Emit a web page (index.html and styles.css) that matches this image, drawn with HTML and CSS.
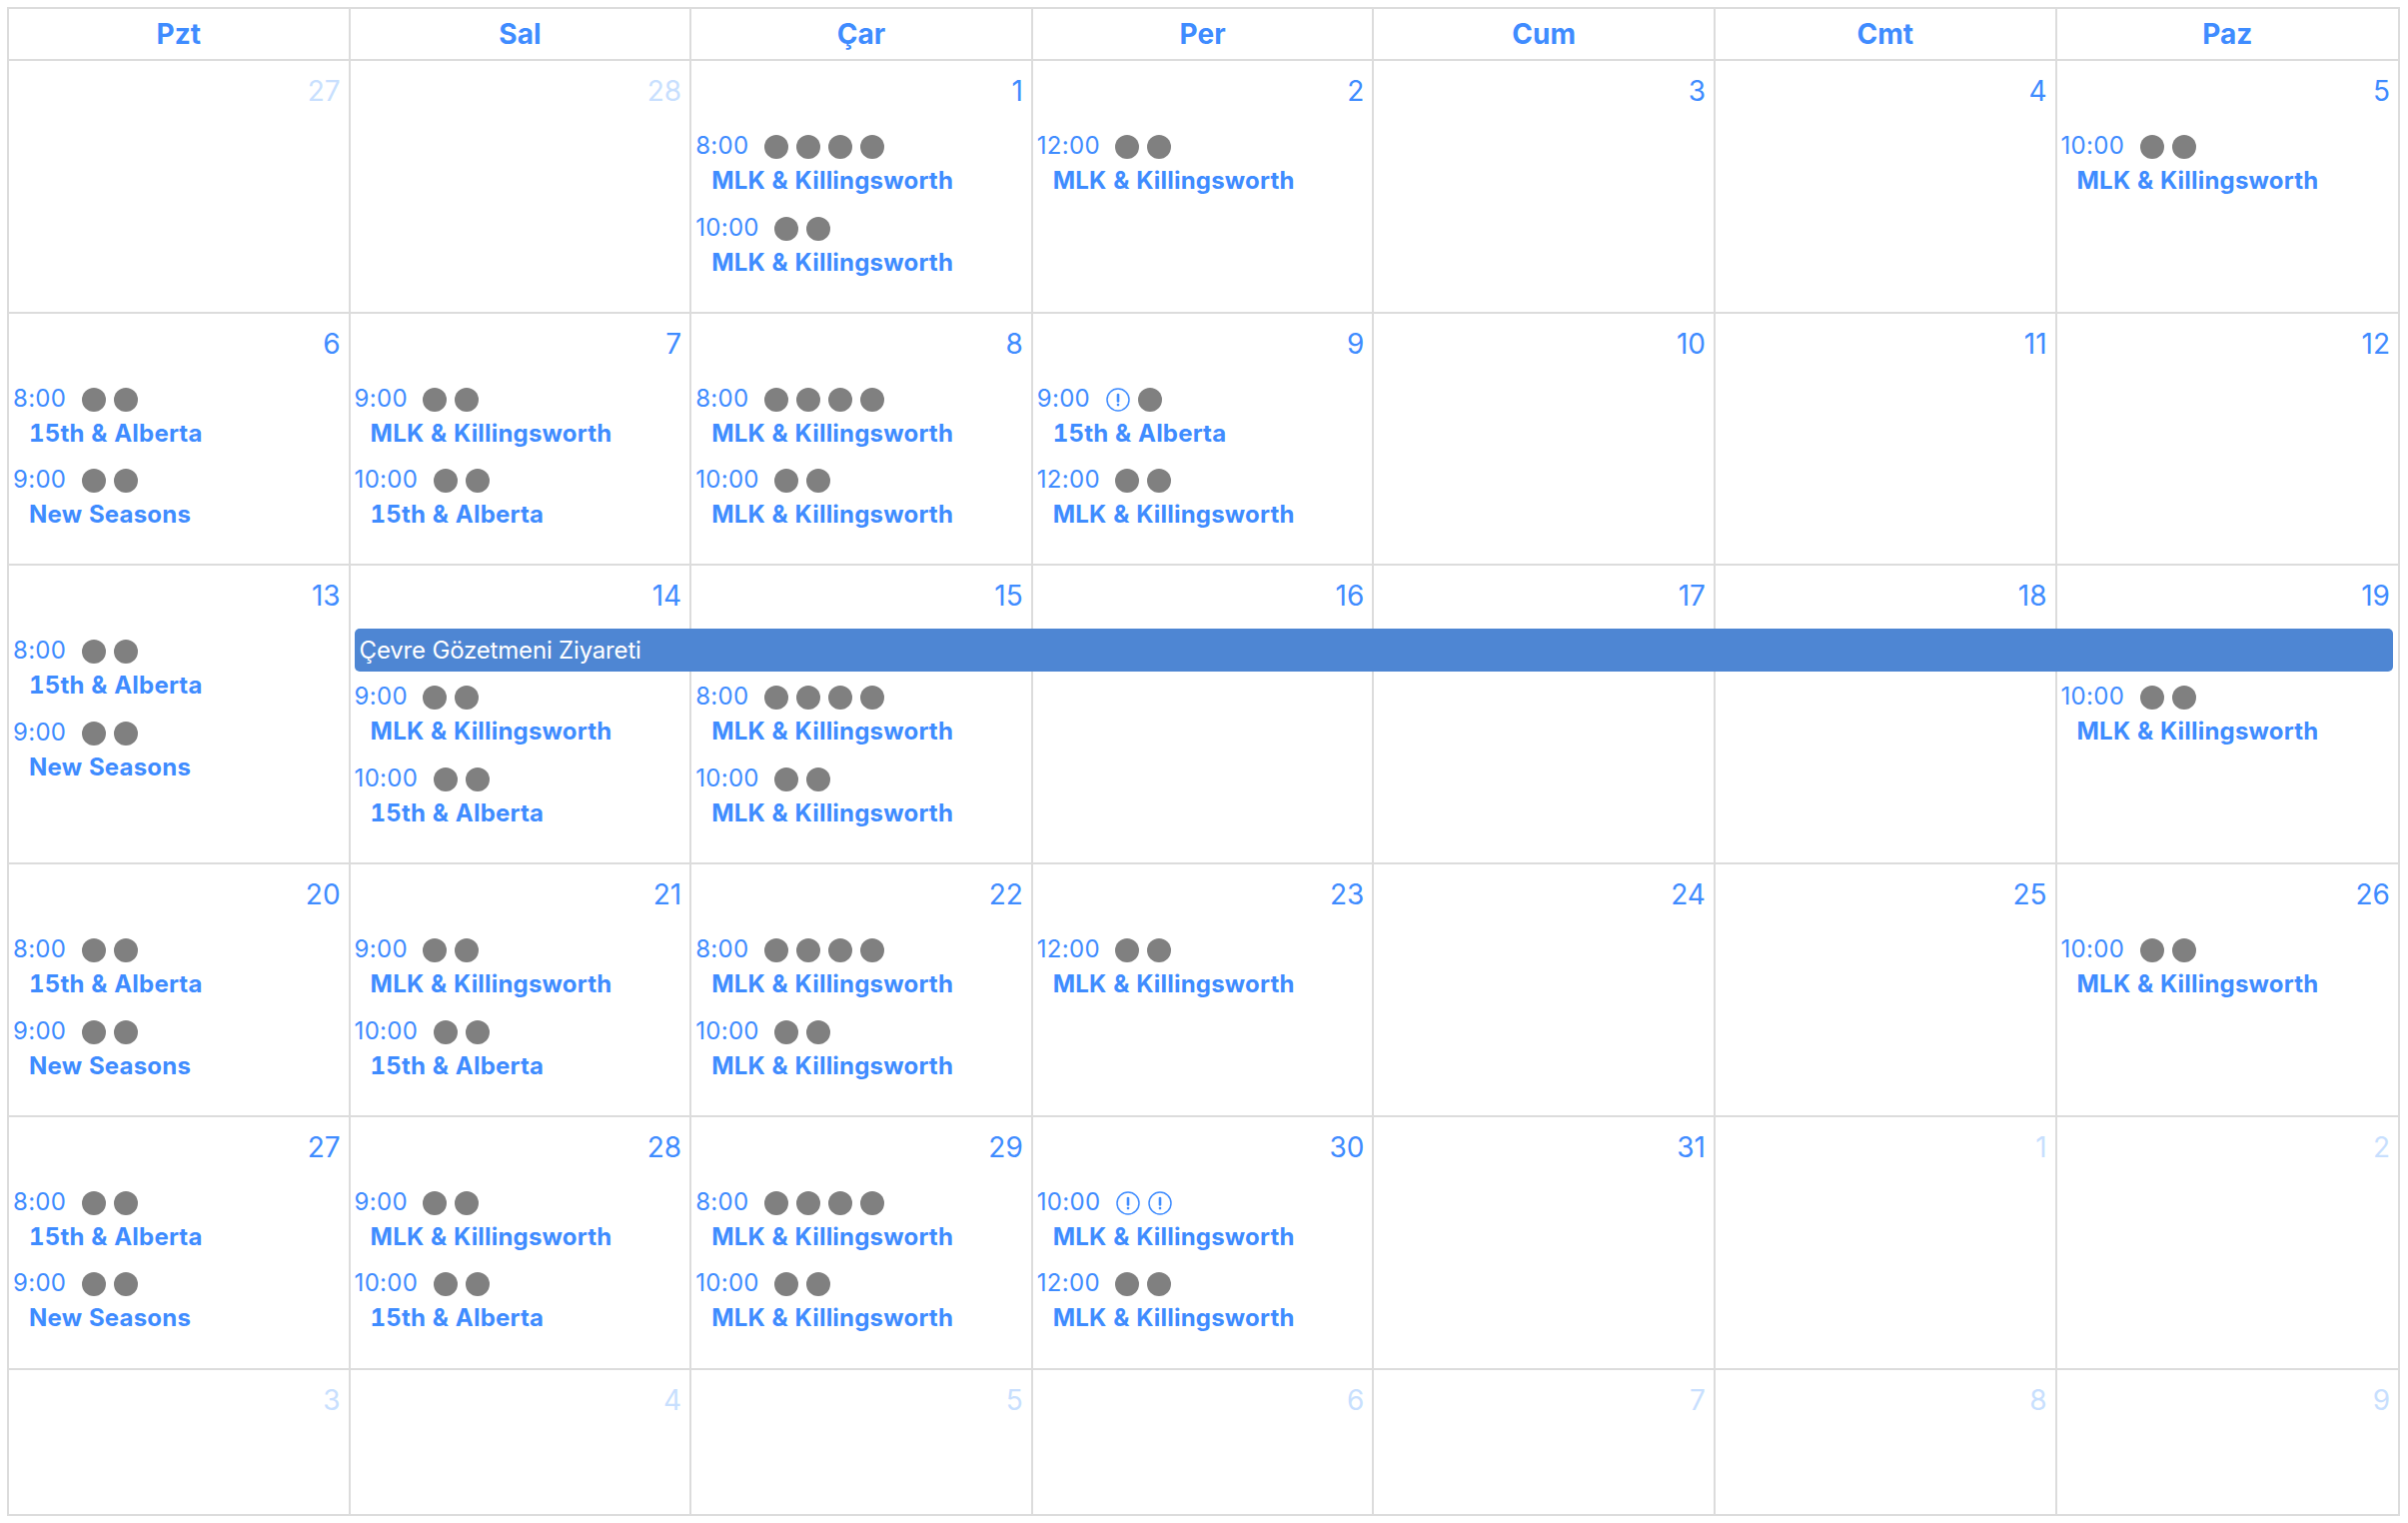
FILE: index.html
```html
<!DOCTYPE html>
<html lang="tr">
<head>
<meta charset="utf-8">
<title>Takvim</title>
<link rel="stylesheet" href="styles.css">
</head>
<body>
<div class="calendar">
  <div class="week head">
    <div class="dow">Pzt</div><div class="dow">Sal</div><div class="dow">Çar</div><div class="dow">Per</div><div class="dow">Cum</div><div class="dow">Cmt</div><div class="dow">Paz</div>
  </div>

  <div class="week">
    <div class="day other"><div class="num">27</div></div>
    <div class="day other"><div class="num">28</div></div>
    <div class="day"><div class="num">1</div>
      <div class="ev"><div class="ev-head"><span class="time">8:00</span><span class="marks"><i class="dot"></i><i class="dot"></i><i class="dot"></i><i class="dot"></i></span></div><div class="place">MLK &amp; Killingsworth</div></div>
      <div class="ev"><div class="ev-head"><span class="time">10:00</span><span class="marks"><i class="dot"></i><i class="dot"></i></span></div><div class="place">MLK &amp; Killingsworth</div></div>
    </div>
    <div class="day"><div class="num">2</div>
      <div class="ev"><div class="ev-head"><span class="time">12:00</span><span class="marks"><i class="dot"></i><i class="dot"></i></span></div><div class="place">MLK &amp; Killingsworth</div></div>
    </div>
    <div class="day"><div class="num">3</div></div>
    <div class="day"><div class="num">4</div></div>
    <div class="day"><div class="num">5</div>
      <div class="ev"><div class="ev-head"><span class="time">10:00</span><span class="marks"><i class="dot"></i><i class="dot"></i></span></div><div class="place">MLK &amp; Killingsworth</div></div>
    </div>
  </div>

  <div class="week">
    <div class="day"><div class="num">6</div>
      <div class="ev"><div class="ev-head"><span class="time">8:00</span><span class="marks"><i class="dot"></i><i class="dot"></i></span></div><div class="place">15th &amp; Alberta</div></div>
      <div class="ev"><div class="ev-head"><span class="time">9:00</span><span class="marks"><i class="dot"></i><i class="dot"></i></span></div><div class="place">New Seasons</div></div>
    </div>
    <div class="day"><div class="num">7</div>
      <div class="ev"><div class="ev-head"><span class="time">9:00</span><span class="marks"><i class="dot"></i><i class="dot"></i></span></div><div class="place">MLK &amp; Killingsworth</div></div>
      <div class="ev"><div class="ev-head"><span class="time">10:00</span><span class="marks"><i class="dot"></i><i class="dot"></i></span></div><div class="place">15th &amp; Alberta</div></div>
    </div>
    <div class="day"><div class="num">8</div>
      <div class="ev"><div class="ev-head"><span class="time">8:00</span><span class="marks"><i class="dot"></i><i class="dot"></i><i class="dot"></i><i class="dot"></i></span></div><div class="place">MLK &amp; Killingsworth</div></div>
      <div class="ev"><div class="ev-head"><span class="time">10:00</span><span class="marks"><i class="dot"></i><i class="dot"></i></span></div><div class="place">MLK &amp; Killingsworth</div></div>
    </div>
    <div class="day"><div class="num">9</div>
      <div class="ev"><div class="ev-head"><span class="time">9:00</span><span class="marks"><svg class="alert" viewBox="0 0 24 24"><circle cx="12" cy="12" r="11"/><path d="M12 7v6.5"/><path d="M12 17v.1"/></svg><i class="dot"></i></span></div><div class="place">15th &amp; Alberta</div></div>
      <div class="ev"><div class="ev-head"><span class="time">12:00</span><span class="marks"><i class="dot"></i><i class="dot"></i></span></div><div class="place">MLK &amp; Killingsworth</div></div>
    </div>
    <div class="day"><div class="num">10</div></div>
    <div class="day"><div class="num">11</div></div>
    <div class="day"><div class="num">12</div></div>
  </div>

  <div class="week">
    <div class="day"><div class="num">13</div>
      <div class="ev"><div class="ev-head"><span class="time">8:00</span><span class="marks"><i class="dot"></i><i class="dot"></i></span></div><div class="place">15th &amp; Alberta</div></div>
      <div class="ev"><div class="ev-head"><span class="time">9:00</span><span class="marks"><i class="dot"></i><i class="dot"></i></span></div><div class="place">New Seasons</div></div>
    </div>
    <div class="day under-bar"><div class="num">14</div>
      <div class="ev"><div class="ev-head"><span class="time">9:00</span><span class="marks"><i class="dot"></i><i class="dot"></i></span></div><div class="place">MLK &amp; Killingsworth</div></div>
      <div class="ev"><div class="ev-head"><span class="time">10:00</span><span class="marks"><i class="dot"></i><i class="dot"></i></span></div><div class="place">15th &amp; Alberta</div></div>
    </div>
    <div class="day under-bar"><div class="num">15</div>
      <div class="ev"><div class="ev-head"><span class="time">8:00</span><span class="marks"><i class="dot"></i><i class="dot"></i><i class="dot"></i><i class="dot"></i></span></div><div class="place">MLK &amp; Killingsworth</div></div>
      <div class="ev"><div class="ev-head"><span class="time">10:00</span><span class="marks"><i class="dot"></i><i class="dot"></i></span></div><div class="place">MLK &amp; Killingsworth</div></div>
    </div>
    <div class="day under-bar"><div class="num">16</div></div>
    <div class="day under-bar"><div class="num">17</div></div>
    <div class="day under-bar"><div class="num">18</div></div>
    <div class="day under-bar"><div class="num">19</div>
      <div class="ev"><div class="ev-head"><span class="time">10:00</span><span class="marks"><i class="dot"></i><i class="dot"></i></span></div><div class="place">MLK &amp; Killingsworth</div></div>
    </div>
    <div class="bar">Çevre Gözetmeni Ziyareti</div>
  </div>

  <div class="week">
    <div class="day"><div class="num">20</div>
      <div class="ev"><div class="ev-head"><span class="time">8:00</span><span class="marks"><i class="dot"></i><i class="dot"></i></span></div><div class="place">15th &amp; Alberta</div></div>
      <div class="ev"><div class="ev-head"><span class="time">9:00</span><span class="marks"><i class="dot"></i><i class="dot"></i></span></div><div class="place">New Seasons</div></div>
    </div>
    <div class="day"><div class="num">21</div>
      <div class="ev"><div class="ev-head"><span class="time">9:00</span><span class="marks"><i class="dot"></i><i class="dot"></i></span></div><div class="place">MLK &amp; Killingsworth</div></div>
      <div class="ev"><div class="ev-head"><span class="time">10:00</span><span class="marks"><i class="dot"></i><i class="dot"></i></span></div><div class="place">15th &amp; Alberta</div></div>
    </div>
    <div class="day"><div class="num">22</div>
      <div class="ev"><div class="ev-head"><span class="time">8:00</span><span class="marks"><i class="dot"></i><i class="dot"></i><i class="dot"></i><i class="dot"></i></span></div><div class="place">MLK &amp; Killingsworth</div></div>
      <div class="ev"><div class="ev-head"><span class="time">10:00</span><span class="marks"><i class="dot"></i><i class="dot"></i></span></div><div class="place">MLK &amp; Killingsworth</div></div>
    </div>
    <div class="day"><div class="num">23</div>
      <div class="ev"><div class="ev-head"><span class="time">12:00</span><span class="marks"><i class="dot"></i><i class="dot"></i></span></div><div class="place">MLK &amp; Killingsworth</div></div>
    </div>
    <div class="day"><div class="num">24</div></div>
    <div class="day"><div class="num">25</div></div>
    <div class="day"><div class="num">26</div>
      <div class="ev"><div class="ev-head"><span class="time">10:00</span><span class="marks"><i class="dot"></i><i class="dot"></i></span></div><div class="place">MLK &amp; Killingsworth</div></div>
    </div>
  </div>

  <div class="week">
    <div class="day"><div class="num">27</div>
      <div class="ev"><div class="ev-head"><span class="time">8:00</span><span class="marks"><i class="dot"></i><i class="dot"></i></span></div><div class="place">15th &amp; Alberta</div></div>
      <div class="ev"><div class="ev-head"><span class="time">9:00</span><span class="marks"><i class="dot"></i><i class="dot"></i></span></div><div class="place">New Seasons</div></div>
    </div>
    <div class="day"><div class="num">28</div>
      <div class="ev"><div class="ev-head"><span class="time">9:00</span><span class="marks"><i class="dot"></i><i class="dot"></i></span></div><div class="place">MLK &amp; Killingsworth</div></div>
      <div class="ev"><div class="ev-head"><span class="time">10:00</span><span class="marks"><i class="dot"></i><i class="dot"></i></span></div><div class="place">15th &amp; Alberta</div></div>
    </div>
    <div class="day"><div class="num">29</div>
      <div class="ev"><div class="ev-head"><span class="time">8:00</span><span class="marks"><i class="dot"></i><i class="dot"></i><i class="dot"></i><i class="dot"></i></span></div><div class="place">MLK &amp; Killingsworth</div></div>
      <div class="ev"><div class="ev-head"><span class="time">10:00</span><span class="marks"><i class="dot"></i><i class="dot"></i></span></div><div class="place">MLK &amp; Killingsworth</div></div>
    </div>
    <div class="day"><div class="num">30</div>
      <div class="ev"><div class="ev-head"><span class="time">10:00</span><span class="marks"><svg class="alert" viewBox="0 0 24 24"><circle cx="12" cy="12" r="11"/><path d="M12 7v6.5"/><path d="M12 17v.1"/></svg><svg class="alert" viewBox="0 0 24 24"><circle cx="12" cy="12" r="11"/><path d="M12 7v6.5"/><path d="M12 17v.1"/></svg></span></div><div class="place">MLK &amp; Killingsworth</div></div>
      <div class="ev"><div class="ev-head"><span class="time">12:00</span><span class="marks"><i class="dot"></i><i class="dot"></i></span></div><div class="place">MLK &amp; Killingsworth</div></div>
    </div>
    <div class="day"><div class="num">31</div></div>
    <div class="day other"><div class="num">1</div></div>
    <div class="day other"><div class="num">2</div></div>
  </div>

  <div class="week">
    <div class="day other"><div class="num">3</div></div>
    <div class="day other"><div class="num">4</div></div>
    <div class="day other"><div class="num">5</div></div>
    <div class="day other"><div class="num">6</div></div>
    <div class="day other"><div class="num">7</div></div>
    <div class="day other"><div class="num">8</div></div>
    <div class="day other"><div class="num">9</div></div>
  </div>
</div>
</body>
</html>
```

FILE: styles.css
```css
* { box-sizing: border-box; }

html, body {
  margin: 0;
  padding: 0;
  background: #fff;
}

body {
  padding: 7px 8px 7px 7px;
  font-family: Inter, "Liberation Sans", sans-serif;
  color: #3f8cff;
}

.calendar {
  display: grid;
  grid-template-rows: 52px 252.67px 252.67px 298.9px 252.67px 252.67px 146.3px;
  width: 2395px;
  border-top: 2px solid #dcdcdc;
  border-left: 2px solid #dcdcdc;
}

.week {
  display: grid;
  grid-template-columns: repeat(6, 341.6px) minmax(0, 1fr);
  grid-template-rows: 100%;
}

.dow,
.day {
  grid-row: 1;
  border-right: 2px solid #dcdcdc;
  border-bottom: 2px solid #dcdcdc;
  min-width: 0;
}

.day:nth-child(1) { grid-column: 1; }
.day:nth-child(2) { grid-column: 2; }
.day:nth-child(3) { grid-column: 3; }
.day:nth-child(4) { grid-column: 4; }
.day:nth-child(5) { grid-column: 5; }
.day:nth-child(6) { grid-column: 6; }
.day:nth-child(7) { grid-column: 7; }

.dow {
  font-size: 28px;
  font-weight: 700;
  line-height: 50px;
  text-align: center;
}

.day {
  padding: 13px 3px 0 4px;
}

.num {
  height: 34px;
  margin-bottom: 21px;
  padding-right: 5px;
  font-size: 28px;
  line-height: 34px;
  text-align: right;
}

.under-bar .num {
  margin-bottom: 67px;
}

.other .num {
  color: #c8dffe;
}

.ev {
  margin-bottom: 12.5px;
}

.ev-head {
  display: flex;
  align-items: flex-start;
  height: 34px;
}

.time {
  margin-right: 15.5px;
  font-size: 24px;
  letter-spacing: 0.3px;
  line-height: 34px;
}

.marks {
  display: flex;
  gap: 8px;
  margin-top: 6px;
}

.dot {
  display: block;
  flex: none;
  width: 24px;
  height: 24px;
  border-radius: 50%;
  background: #808080;
}

.alert {
  display: block;
  flex: none;
  width: 24px;
  height: 24px;
  fill: none;
  stroke: #3f8cff;
  stroke-width: 1.5;
}

.alert path {
  stroke-width: 2.6;
  stroke-linecap: round;
}

.place {
  margin-top: 1px;
  padding-left: 16px;
  font-size: 24px;
  font-variant-numeric: tabular-nums;
  font-weight: 700;
  letter-spacing: 0.2px;
  line-height: 34px;
  white-space: nowrap;
}

.bar {
  grid-row: 1;
  grid-column: 2 / 8;
  align-self: start;
  height: 43px;
  margin: 62.6px 7px 0 4px;
  padding-left: 5px;
  border-radius: 5px;
  background: #4e86d3;
  color: #fff;
  font-size: 24px;
  letter-spacing: -0.18px;
  line-height: 43px;
}
```
